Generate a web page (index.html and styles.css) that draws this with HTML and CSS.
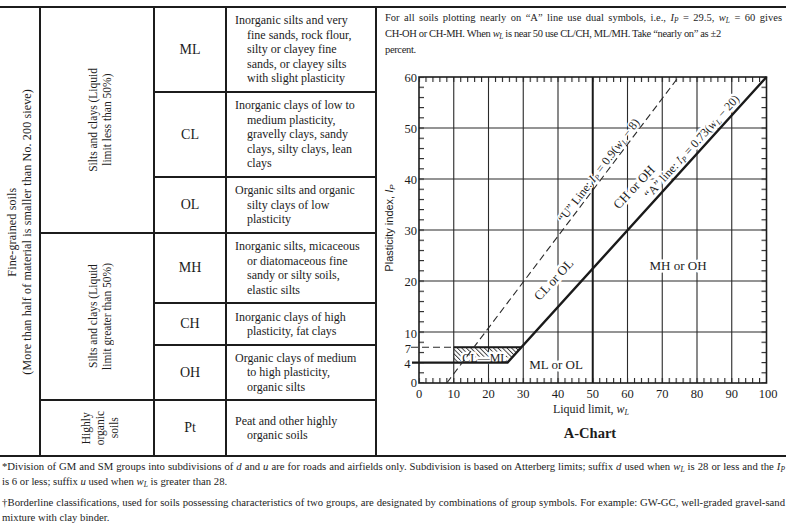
FILE: index.html
```html
<!DOCTYPE html>
<html>
<head>
<meta charset="utf-8">
<link rel="stylesheet" href="styles.css">
</head>
<body>
<div class="page">
  <div class="soil-table">
    <div class="c-group">
      <div class="vtext vtext-lg">Fine-grained soils<br>(More than half of material is smaller than No. 200 sieve)</div>
    </div>
    <div class="c-subs">
      <div class="sub sub-lo"><div class="vtext">Silts and clays (Liquid<br>limit less than 50%)</div></div>
      <div class="sub sub-hi"><div class="vtext">Silts and clays (Liquid<br>limit greater than 50%)</div></div>
      <div class="sub sub-org"><div class="vtext">Highly<br>organic<br>soils</div></div>
    </div>
    <div class="c-rows">
      <div class="row row-ml">
        <div class="sym">ML</div>
        <div class="desc"><p>Inorganic silts and very<br>fine sands, rock flour,<br>silty or clayey fine<br>sands, or clayey silts<br>with slight plasticity</p></div>
      </div>
      <div class="row row-cl">
        <div class="sym">CL</div>
        <div class="desc"><p>Inorganic clays of low to<br>medium plasticity,<br>gravelly clays, sandy<br>clays, silty clays, lean<br>clays</p></div>
      </div>
      <div class="row row-ol">
        <div class="sym">OL</div>
        <div class="desc"><p>Organic silts and organic<br>silty clays of low<br>plasticity</p></div>
      </div>
      <div class="row row-mh">
        <div class="sym">MH</div>
        <div class="desc"><p>Inorganic silts, micaceous<br>or diatomaceous fine<br>sandy or silty soils,<br>elastic silts</p></div>
      </div>
      <div class="row row-ch">
        <div class="sym">CH</div>
        <div class="desc"><p>Inorganic clays of high<br>plasticity, fat clays</p></div>
      </div>
      <div class="row row-oh">
        <div class="sym">OH</div>
        <div class="desc"><p>Organic clays of medium<br>to high plasticity,<br>organic silts</p></div>
      </div>
      <div class="row row-pt">
        <div class="sym">Pt</div>
        <div class="desc"><p>Peat and other highly<br>organic soils</p></div>
      </div>
    </div>
    <div class="c-chart">
      <p class="note"><span class="note-full">For all soils plotting nearly on “A” line use dual symbols, i.e., <span class="v">I<sub>P</sub></span> = 29.5, <span class="v">w<sub>L</sub></span> = 60 gives</span><span class="note-tight">CH-OH or CH-MH. When <span class="v">w<sub>L</sub></span> is near 50 use CL/CH, ML/MH. Take “nearly on” as ±2<br>percent.</span></p>
      <svg class="chart" width="409" height="397" viewBox="377 58 409 397" xmlns="http://www.w3.org/2000/svg">
        <defs>
          <pattern id="tick-x" x="418.5" y="0" width="6.95" height="20" patternUnits="userSpaceOnUse"><rect width="1.1" height="20" fill="#222"/></pattern>
          <pattern id="tick-y" x="0" y="76.5" width="20" height="10.2" patternUnits="userSpaceOnUse"><rect width="20" height="1.1" fill="#222"/></pattern>
          <pattern id="hatch" width="3.2" height="3.2" patternUnits="userSpaceOnUse" patternTransform="rotate(-45)"><rect width="0.9" height="3.2" fill="#333"/></pattern>
        </defs>
        <rect x="419" y="77" width="347.5" height="5" fill="url(#tick-x)"/>
        <rect x="419" y="378" width="347.5" height="5" fill="url(#tick-x)"/>
        <rect x="419" y="77" width="5" height="306" fill="url(#tick-y)"/>
        <rect x="761.5" y="77" width="5" height="306" fill="url(#tick-y)"/>
        <path class="grid" d="M453.75 77V383M488.5 77V383M523.25 77V383M558 77V383M627.5 77V383M662.25 77V383M697 77V383M731.75 77V383M419 332H766.5M419 281H766.5M419 230H766.5M419 179H766.5M419 128H766.5"/>
        <path class="heavy mid" d="M592.75 77V383"/>
        <rect class="frame" x="419" y="77" width="347.5" height="306"/>
        <polygon class="hatch" points="453.75,362.6 507.5,362.6 521.4,347.3 453.75,347.3"/>

        <text class="lbl" transform="translate(553.5 279.5) rotate(-47)" y="4.5">CL or OL</text>
        <text class="lbl" transform="translate(634 187) rotate(-47)" y="4.5">CH or OH</text>
        <text class="lbl lbl-sm" transform="translate(698.5 152.6) rotate(-47.8)" y="-5">“A” line: <tspan font-style="italic">I</tspan><tspan class="subs" dy="2">P</tspan><tspan dy="-2"> = 0.73(</tspan><tspan font-style="italic">w</tspan><tspan class="subs" dy="2">L</tspan><tspan dy="-2"> − 20)</tspan></text>
        <text class="lbl lbl-sm lbl-thin" transform="translate(604.2 174.7) rotate(-52.9)" y="-3">“U” Line: <tspan font-style="italic">I</tspan><tspan class="subs" dy="2">P</tspan><tspan dy="-2"> = 0.9(</tspan><tspan font-style="italic">w</tspan><tspan class="subs" dy="2">L</tspan><tspan dy="-2"> − 8)</tspan></text>
        <text class="lbl" x="678" y="269.5">MH or OH</text>
        <text class="lbl" x="556" y="368.5">ML or OL</text>
        <text class="lbl lbl-sm" x="485" y="361.5">CL—ML</text>

        <path class="heavy" d="M412 362.6H507.5L766.5 77"/>
        <path class="heavy mid" d="M453.75 347.3H521.4"/>
        <path class="dash" d="M411 347.3H453.75"/>
        <path class="dash" d="M446.8 383L678.5 77"/>

        <g class="axis-y">
          <text x="417" y="81.5">60</text>
          <text x="417" y="132.5">50</text>
          <text x="417" y="183.5">40</text>
          <text x="417" y="234.5">30</text>
          <text x="417" y="285.5">20</text>
          <text x="417" y="337.5">10</text>
          <text x="411" y="352.5">7</text>
          <text x="410.5" y="368">4</text>
          <text x="417" y="387">0</text>
        </g>
        <g class="axis-x">
          <text x="419" y="397.5">0</text>
          <text x="453.75" y="397.5">10</text>
          <text x="488.5" y="397.5">20</text>
          <text x="523.25" y="397.5">30</text>
          <text x="558" y="397.5">40</text>
          <text x="592.75" y="397.5">50</text>
          <text x="627.5" y="397.5">60</text>
          <text x="662.25" y="397.5">70</text>
          <text x="697" y="397.5">80</text>
          <text x="731.75" y="397.5">90</text>
          <text x="768" y="397.5">100</text>
        </g>
        <text class="axis-title" x="591" y="413">Liquid limit, <tspan font-style="italic">w</tspan><tspan class="subs" dy="2">L</tspan></text>
        <text class="chart-title" x="590" y="437.5">A-Chart</text>
        <text class="axis-title-y" transform="translate(393 228) rotate(-90)">Plasticity index, <tspan font-style="italic">I</tspan><tspan class="subs" dy="2">P</tspan></text>
      </svg>
    </div>
  </div>
  <div class="notes">
    <p><span class="full">*Division of GM and SM groups into subdivisions of <i>d</i> and <i>u</i> are for roads and airfields only. Subdivision is based on Atterberg limits; suffix <i>d</i> used when <span class="v">w<sub>L</sub></span> is 28 or less and the <span class="v">I<sub>P</sub></span></span>is 6 or less; suffix <i>u</i> used when <span class="v">w<sub>L</sub></span> is greater than 28.</p>
    <p><span class="full">†Borderline classifications, used for soils possessing characteristics of two groups, are designated by combinations of group symbols. For example: GW-GC, well-graded gravel-sand</span>mixture with clay binder.</p>
  </div>
</div>
</body>
</html>
```
FILE: styles.css
```css
* { box-sizing: border-box; }
body {
  margin: 0;
  background: #fff;
  color: #1c1c1c;
  font-family: "Liberation Serif", "Times New Roman", serif;
}
.page { width: 800px; height: 526px; overflow: hidden; }

.soil-table {
  display: flex;
  width: 786px;
  height: 451px;
  margin-top: 6px;
  border-top: 2px solid #1c1c1c;
  border-bottom: 2px solid #1c1c1c;
}
.vtext {
  writing-mode: vertical-rl;
  transform: rotate(180deg);
  text-align: center;
  white-space: nowrap;
}
.c-group {
  width: 41px;
  border-right: 2px solid #1c1c1c;
  display: flex;
  align-items: center;
  justify-content: center;
}
.vtext-lg { font-size: 12px; line-height: 15px; letter-spacing: 0.15px; }

.c-subs {
  width: 114px;
  border-right: 2px solid #1c1c1c;
  display: flex;
  flex-direction: column;
}
.sub {
  display: flex;
  align-items: center;
  justify-content: center;
  padding-left: 6px;
  font-size: 11.5px;
  line-height: 14px;
}
.sub + .sub { border-top: 2px solid #1c1c1c; }
.sub-lo { height: 224px; }
.sub-hi { height: 167px; }
.sub-org { height: 56px; }

.c-rows {
  width: 222px;
  border-right: 2px solid #1c1c1c;
  display: flex;
  flex-direction: column;
}
.row { display: grid; grid-template-columns: 72px 1fr; }
.row + .row { border-top: 2px solid #1c1c1c; }
.row-ml { height: 83px; }
.row-cl { height: 85px; }
.row-ol { height: 56px; }
.row-mh { height: 70px; }
.row-ch { height: 42px; }
.row-oh { height: 55px; }
.row-pt { height: 56px; }
.sym {
  border-right: 2px solid #1c1c1c;
  display: flex;
  align-items: center;
  justify-content: center;
  font-size: 14px;
}
.desc {
  display: flex;
  align-items: center;
  padding: 0 4px 0 8px;
  font-size: 12px;
  line-height: 14.5px;
}
.desc p { margin: 0; padding-left: 12px; text-indent: -12px; white-space: nowrap; }

.c-chart { flex: 1; display: flex; flex-direction: column; }
.note {
  margin: 0;
  height: 50px;
  padding: 2px 4px 0 8px;
  font-size: 10.5px;
  line-height: 16px;
}
.note-full { display: block; text-align: justify; text-align-last: justify; }
.note-tight { letter-spacing: -0.35px; }
.chart { display: block; }
.v { font-style: italic; }
sub { font-size: 0.7em; vertical-align: -0.3em; line-height: 1; }

.grid { fill: none; stroke: #2a2a2a; stroke-width: 1.1; }
.frame { fill: none; stroke: #1c1c1c; stroke-width: 1.6; }
.heavy { fill: none; stroke: #1a1a1a; stroke-width: 2.4; }
.heavy.mid { stroke-width: 2; }
.dash { fill: none; stroke: #2a2a2a; stroke-width: 1.1; stroke-dasharray: 7 4; }
.hatch { fill: url(#hatch); stroke: #333; stroke-width: 0.8; }

.lbl {
  font-family: "Liberation Serif", serif;
  font-size: 13px;
  fill: #1c1c1c;
  text-anchor: middle;
  paint-order: stroke;
  stroke: #fff;
  stroke-width: 5px;
  stroke-linejoin: round;
}
.lbl-sm { font-size: 12px; }
.lbl-thin { stroke-width: 3px; }
.subs { font-size: 8px; font-style: italic; }

.axis-y text { font-size: 12.5px; text-anchor: end; fill: #1c1c1c; }
.axis-x text { font-size: 12.5px; text-anchor: middle; fill: #1c1c1c; }
.axis-title { font-size: 12px; text-anchor: middle; fill: #1c1c1c; }
.chart-title { font-size: 14.5px; font-weight: bold; text-anchor: middle; fill: #1c1c1c; }
.axis-title-y {
  font-family: "Liberation Sans", Arial, sans-serif;
  font-size: 11px;
  text-anchor: middle;
  fill: #1c1c1c;
}

.notes {
  width: 785px;
  padding: 2px 0 0 2px;
  font-size: 10.7px;
  line-height: 15px;
}
.notes p { margin: 0; }
.notes p + p { margin-top: 6px; }
.notes .full { display: block; text-align: justify; text-align-last: justify; }
```
